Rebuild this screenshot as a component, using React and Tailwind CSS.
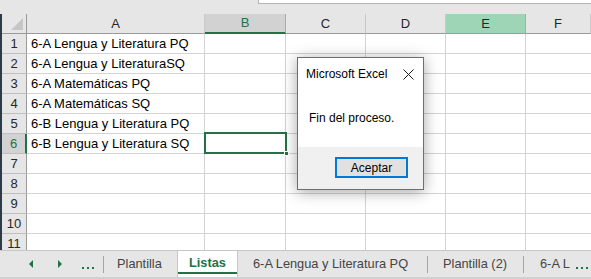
import React from "react";

const F = { fontFamily: '"Liberation Sans", Arial, sans-serif' };

const rows = [
  "6-A Lengua y Literatura PQ",
  "6-A Lengua y LiteraturaSQ",
  "6-A Matemáticas PQ",
  "6-A Matemáticas SQ",
  "6-B Lengua y Literatura PQ",
  "6-B Lengua y Literatura SQ",
  "",
  "",
  "",
  "",
  "",
];

function ColHeader({ label, w, kind }) {
  const base = "h-full shrink-0 flex items-center justify-center border-r text-[13px] ";
  if (kind === "sel")
    return (
      <div className={base + "bg-[#d2d2d2] border-[#ababab] text-[#217346] border-b-2 border-b-[#217346] " + w}>{label}</div>
    );
  if (kind === "green")
    return <div className={base + "bg-[#9fd5b7] border-[#ababab] text-[#262626] border-b border-b-[#9a9a9a] " + w}>{label}</div>;
  return <div className={base + "border-[#c8c8c8] text-[#262626] border-b border-b-[#9a9a9a] " + w}>{label}</div>;
}

function Sep() {
  return <div className="w-px h-[17px] bg-[#a6a6a6] shrink-0" />;
}

function Dots() {
  return (
    <div className="flex gap-[3px] shrink-0 mt-[7px]">
      <div className="w-[2px] h-[2px] bg-[#217346]" />
      <div className="w-[2px] h-[2px] bg-[#217346]" />
      <div className="w-[2px] h-[2px] bg-[#217346]" />
    </div>
  );
}

export default function App() {
  return (
    <div className="relative w-[591px] h-[279px] overflow-hidden bg-[#e6e6e6] text-[#262626]" style={F}>
      {/* top strip */}
      <div className="h-[14px] flex">
        <div className="w-[258px]" />
        <div className="flex-1 h-[4px] bg-white border-b border-l border-[#b4b4b4]" />
      </div>
      <div className="flex h-[236px]">
        <div className="w-[2px] bg-[#2e3b48]" />
        <div className="flex-1 flex flex-col overflow-hidden bg-white">
          {/* header row */}
          <div className="flex h-[20px] shrink-0 bg-[#e6e6e6]">
            <div className="w-[25px] h-full shrink-0 border-r border-b border-[#9a9a9a] bg-[#e6e6e6] relative">
              <div className="absolute right-[3px] bottom-[3px] w-0 h-0 border-l-[12px] border-l-transparent border-b-[12px] border-b-[#c6c6c6]" />
            </div>
            <ColHeader label="A" w="w-[178px]" />
            <ColHeader label="B" w="w-[81px]" kind="sel" />
            <ColHeader label="C" w="w-[80px]" />
            <ColHeader label="D" w="w-[80px]" />
            <ColHeader label="E" w="w-[80px]" kind="green" />
            <ColHeader label="F" w="flex-1" />
          </div>
          {rows.map((t, i) => {
            const sel = i === 5;
            return (
              <div key={i} className="flex h-[20px] shrink-0">
                <div
                  className={
                    "w-[25px] h-full shrink-0 flex items-center justify-center text-[13px] border-b border-b-[#bfbfbf] " +
                    (sel
                      ? "bg-[#d2d2d2] text-[#217346] border-r-2 border-r-[#217346]"
                      : "bg-[#e6e6e6] border-r border-r-[#9a9a9a]")
                  }
                >
                  {i + 1}
                </div>
                <div className="w-[178px] h-full shrink-0 border-r border-b border-[#d4d4d4] pl-[4px] text-[13px] leading-[19px] whitespace-nowrap text-black">
                  {t}
                </div>
                <div className="w-[81px] h-full shrink-0 border-r border-b border-[#d4d4d4]" />
                <div className="w-[80px] h-full shrink-0 border-r border-b border-[#d4d4d4]" />
                <div className="w-[80px] h-full shrink-0 border-r border-b border-[#d4d4d4]" />
                <div className="w-[80px] h-full shrink-0 border-r border-b border-[#d4d4d4]" />
                <div className="flex-1 h-full border-b border-[#d4d4d4]" />
              </div>
            );
          })}
        </div>
      </div>

      {/* selected cell B6 */}
      <div className="absolute left-[204px] top-[132px] w-[83px] h-[22px] border-2 border-[#217346]" />
      <div className="absolute left-[284px] top-[151px] w-[5px] h-[5px] bg-[#217346] border border-white" />

      {/* tab bar */}
      <div className="h-[27px] border-t border-[#c6c6c6] flex items-center text-[12.8px] text-[#444444] relative overflow-hidden">
        <div className="w-[29px] shrink-0" />
        <div className="shrink-0 w-0 h-0 border-y-[4px] border-y-transparent border-r-[4px] border-r-[#217346]" />
        <div className="w-[25px] shrink-0" />
        <div className="shrink-0 w-0 h-0 border-y-[4px] border-y-transparent border-l-[4px] border-l-[#217346]" />
        <div className="w-[20px] shrink-0" />
        <Dots />
        <div className="w-[9px] shrink-0" />
        <Sep />
        <div className="w-[73px] shrink-0 pl-[13px] whitespace-nowrap">Plantilla</div>
        <div className="self-stretch -mt-px w-[61px] shrink-0 bg-white border-x border-[#c6c6c6] flex items-center justify-center relative">
          <span className="font-bold text-[#217346] mt-[-1px]">Listas</span>
          <div className="absolute left-0 right-0 bottom-[3px] h-[2px] bg-[#217346]" />
        </div>
        <div className="w-[189px] shrink-0 pl-[15px] whitespace-nowrap">6-A Lengua y Literatura PQ</div>
        <Sep />
        <div className="w-[95px] shrink-0 pl-[15px] whitespace-nowrap">Plantilla (2)</div>
        <Sep />
        <div className="w-[46px] shrink-0 pl-[16px] whitespace-nowrap overflow-hidden">6-A L</div>
        <div className="w-[6px] shrink-0" />
        <Dots />
      </div>
      <div className="h-[2px] bg-[#d0d0d0]" />

      {/* dialog */}
      <div className="absolute left-[297px] top-[57px] w-[127px] h-[133px] border border-[#6e6e6e] bg-white shadow-[0_2px_14px_rgba(0,0,0,0.35)] flex flex-col text-[12px] text-black">
        <div className="h-[30px] flex items-center pl-[8px] pr-[9px] pt-[1px] justify-between">
          <span className="whitespace-nowrap">Microsoft Excel</span>
          <svg width="11" height="11" viewBox="0 0 11 11" className="mt-[1px]">
            <path d="M0.5 0.5 L10.5 10.5 M10.5 0.5 L0.5 10.5" stroke="#1a1a1a" strokeWidth="1" />
          </svg>
        </div>
        <div className="h-[59px] flex items-center pl-[11px]">
          <span className="whitespace-nowrap">Fin del proceso.</span>
        </div>
        <div className="flex-1 bg-[#f0f0f0] flex items-start justify-end pr-[15px] pt-[10px]">
          <div className="w-[73px] h-[21px] border-2 border-[#0078d7] bg-[#e1e1e1] flex items-center justify-center">
            Aceptar
          </div>
        </div>
      </div>
    </div>
  );
}
